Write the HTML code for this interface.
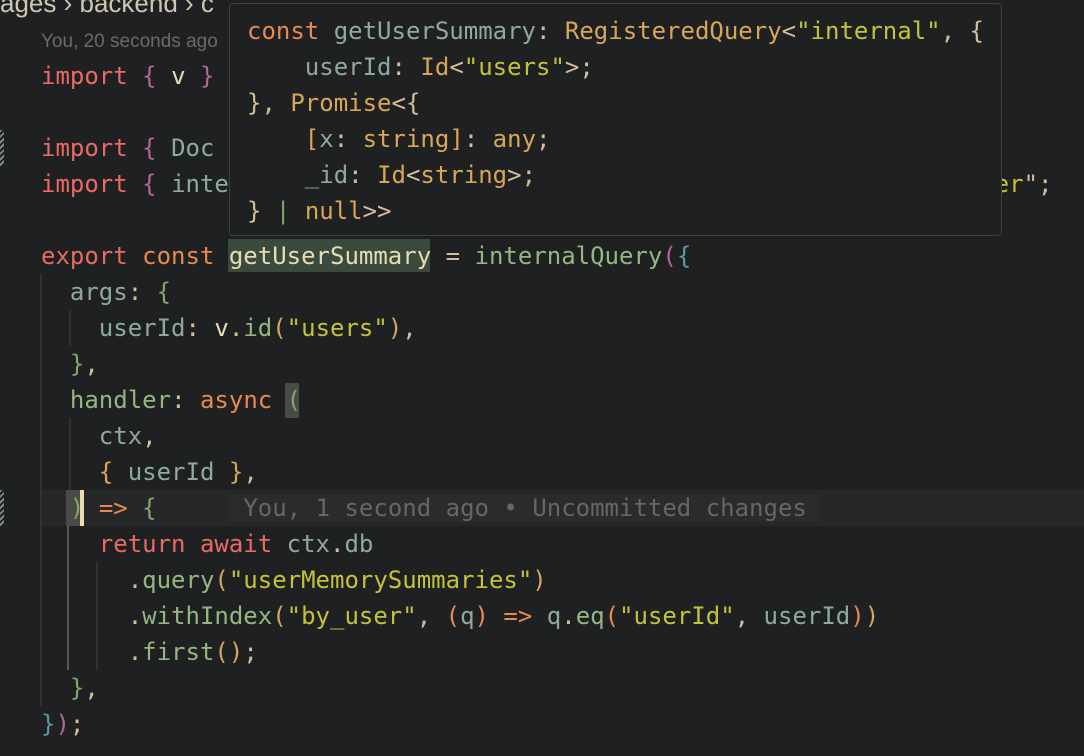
<!DOCTYPE html>
<html><head><meta charset="utf-8"><style>
html,body{margin:0;padding:0;background:#1f2022;width:1084px;height:756px;overflow:hidden;position:relative}
.code{position:absolute;left:41px;top:58px;font-family:"DejaVu Sans Mono","Liberation Mono",monospace;font-size:24px;line-height:36px;white-space:pre;color:#d4be98;margin:0}
.k{color:#ea6962}.o{color:#e78a4e}.s{color:#c5c23a}.i{color:#8fa9a0}.f{color:#93b77f}.y{color:#d8a657}.p{color:#d4be98}.v{color:#e8dcb5}.m{color:#b0679a}.b{color:#5a9aa0}.g{color:#7fa86a}
.tip{position:absolute;left:229px;top:3px;width:771px;height:231px;background:#1f2022;border:1.5px solid #3e3f41;border-radius:4px}
.tip pre{position:absolute;left:17px;top:9px;margin:0;font-family:"DejaVu Sans Mono","Liberation Mono",monospace;font-size:24px;line-height:36px;color:#d4be98}
.guide{position:absolute;width:2px;background:#303132}
</style></head><body>
<div style="position:absolute;left:0;top:-12px;font-family:'Liberation Sans',sans-serif;font-size:26px;color:#cfc6b2">ages &#x203A; backend &#x203A; c</div>
<div style="position:absolute;left:41px;top:31px;font-family:'Liberation Sans',sans-serif;font-size:19px;color:#6c6a66">You, 20 seconds ago</div>
<div style="position:absolute;left:40px;top:490px;width:1044px;height:36px;background:#262728"></div>
<div style="position:absolute;left:228px;top:494px;width:592px;height:28px;background:#2b2b2b"></div>
<div style="position:absolute;left:66px;top:490px;width:14px;height:36px;background:#4a4a46"></div>
<div style="position:absolute;left:80px;top:490px;width:4px;height:36px;background:#e8dcb0"></div>
<div style="position:absolute;left:228px;top:239px;width:202px;height:33px;background:#3a4a3c"></div>
<div style="position:absolute;left:285px;top:383px;width:14px;height:35px;background:#4a4a46"></div>
<div class="guide" style="left:40px;top:274px;height:432px"></div>
<div class="guide" style="left:69px;top:310px;height:36px"></div>
<div class="guide" style="left:69px;top:418px;height:72px"></div>
<div class="guide" style="left:67px;top:526px;height:144px;background:#5e5650"></div>
<div class="guide" style="left:96px;top:562px;height:108px"></div>
<div style="position:absolute;left:0;top:130px;width:4px;height:36px;background:repeating-linear-gradient(135deg,#7a8a88 0 2px,transparent 2px 4px)"></div>
<div style="position:absolute;left:0;top:490px;width:4px;height:36px;background:repeating-linear-gradient(135deg,#7a8a88 0 2px,transparent 2px 4px)"></div>
<pre class="code"><span class="k">import</span> <span class="m">{</span> <span class="v">v</span> <span class="m">}</span>

<span class="k">import</span> <span class="m">{</span> <span class="i">Doc</span>
<span class="k">import</span> <span class="m">{</span> <span class="i">inte</span>                                                     <span class="s">er</span>";

<span class="k">export</span> <span class="o">const</span> <span class="v">getUserSummary</span> <span class="p">=</span> <span class="f">internalQuery</span><span class="m">(</span><span class="b">{</span>
  <span class="i">args</span>: <span class="g">{</span>
    <span class="i">userId</span>: <span class="v">v</span>.<span class="f">id</span><span class="y">(</span><span class="s">"users"</span><span class="y">)</span>,
  <span class="g">}</span>,
  <span class="f">handler</span>: <span class="o">async</span> <span class="g">(</span>
    <span class="i">ctx</span>,
    <span class="y">{</span> <span class="i">userId</span> <span class="y">}</span>,
  <span class="g">)</span> <span class="o">=&gt;</span> <span class="g">{</span>      <span style="color:#6a6560">You, 1 second ago • Uncommitted changes</span>
    <span class="k">return</span> <span class="k">await</span> <span class="i">ctx</span>.<span class="i">db</span>
      .<span class="f">query</span><span class="y">(</span><span class="s">"userMemorySummaries"</span><span class="y">)</span>
      .<span class="f">withIndex</span><span class="y">(</span><span class="s">"by_user"</span>, <span class="o">(</span><span class="i">q</span><span class="o">)</span> <span class="o">=&gt;</span> <span class="i">q</span>.<span class="f">eq</span><span class="o">(</span><span class="s">"userId"</span>, <span class="i">userId</span><span class="o">)</span><span class="y">)</span>
      .<span class="f">first</span><span class="y">()</span>;
  <span class="g">}</span>,
<span class="b">}</span><span class="m">)</span>;</pre>
<div class="tip"><pre><span class="o">const</span> <span class="i">getUserSummary</span>: <span class="y">RegisteredQuery</span>&lt;<span class="s">"internal"</span>, {
    <span class="i">userId</span>: <span class="y">Id</span>&lt;<span class="s">"users"</span>&gt;;
}, <span class="y">Promise</span>&lt;{
    <span class="y">[</span><span class="i">x</span>: <span class="y">string</span><span class="y">]</span>: <span class="y">any</span>;
    <span class="i">_id</span>: <span class="y">Id</span>&lt;<span class="y">string</span>&gt;;
} <span class="g">|</span> <span class="y">null</span>&gt;&gt;</pre></div>
</body></html>
